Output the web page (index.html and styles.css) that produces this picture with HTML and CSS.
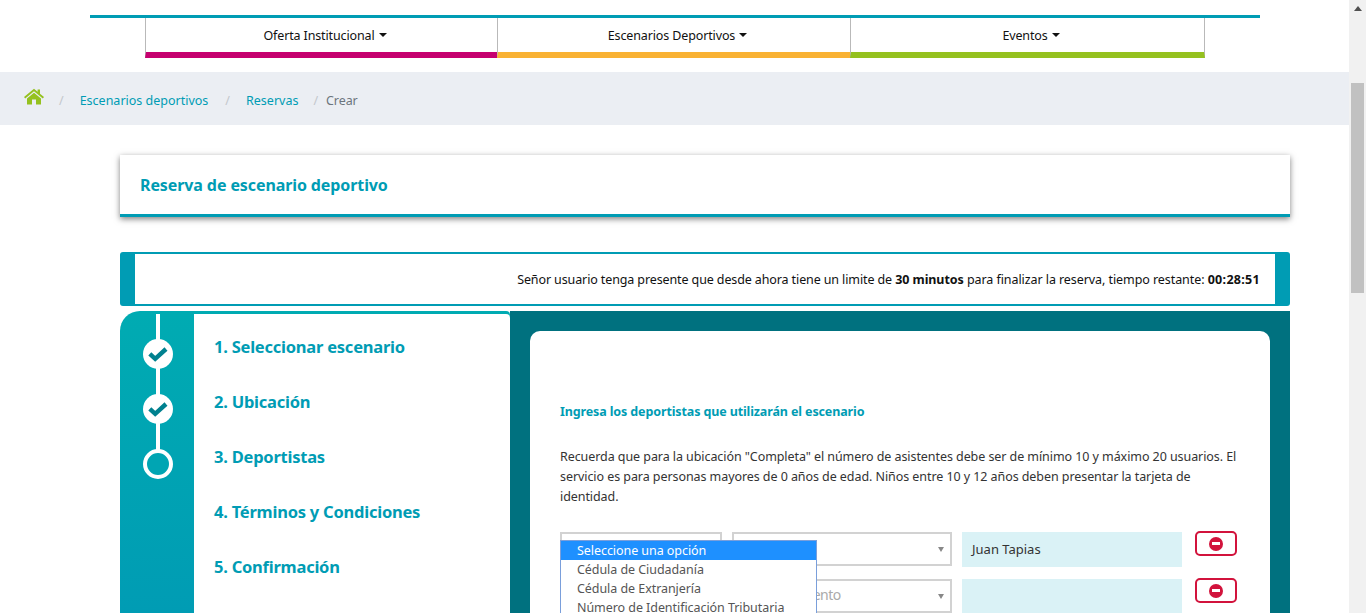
FILE: index.html
```html
<!DOCTYPE html>
<html lang="es">
<head>
    <meta charset="UTF-8">
    <title>Reserva de escenario deportivo</title>
    <link rel="stylesheet" href="styles.css">
</head>
<body>
    <div class="page">
        <header class="header">
            <nav class="menu">
                <a class="menu-item menu-pink">Oferta Institucional<span class="caret"></span></a>
                <a class="menu-item menu-yellow">Escenarios Deportivos<span class="caret"></span></a>
                <a class="menu-item menu-green">Eventos<span class="caret"></span></a>
            </nav>
        </header>

        <div class="breadcrumb">
            <svg class="home-icon" viewBox="0 0 20 17" width="20" height="17">
                <path fill="#95c11f" d="M10 0.8 L13.6 3.8 V1.6 H16 V5.8 L20 9.1 L18.8 10.4 L10 3.2 L1.2 10.4 L0 9.1 Z"/>
                <path fill="#95c11f" d="M10 4.8 L17 10.4 V16.6 H12 V11.6 H8 V16.6 H3 V10.4 Z"/>
            </svg>
            <span class="sep">/</span>
            <a class="crumb">Escenarios deportivos</a>
            <span class="sep">/</span>
            <a class="crumb">Reservas</a>
            <span class="sep sep-last">/</span>
            <span class="crumb-current">Crear</span>
        </div>

        <main class="main">
            <div class="title-card">
                <h1>Reserva de escenario deportivo</h1>
            </div>

            <div class="timer">
                <p><span class="timer-lead">Señor usuario tenga presente que desde ahora tiene un limite de</span> <b>30 minutos</b> para finalizar la reserva, tiempo restante: <b class="timer-clock">00:28:51</b></p>
            </div>

            <div class="wizard">
                <aside class="steps">
                    <div class="steps-rail">
                        <span class="rail-line"></span>
                        <span class="dot dot-done">
                            <svg viewBox="0 0 20 15" width="20" height="15"><path fill="none" stroke="#00818f" stroke-width="4.4" d="M1.8 6.8 L7.2 11.8 L18 2"/></svg>
                        </span>
                        <span class="dot dot-done">
                            <svg viewBox="0 0 20 15" width="20" height="15"><path fill="none" stroke="#00818f" stroke-width="4.4" d="M1.8 6.8 L7.2 11.8 L18 2"/></svg>
                        </span>
                        <span class="dot dot-open"></span>
                    </div>
                    <ol class="steps-list">
                        <li>1. Seleccionar escenario</li>
                        <li>2. Ubicación</li>
                        <li>3. Deportistas</li>
                        <li>4. Términos y Condiciones</li>
                        <li>5. Confirmación</li>
                    </ol>
                </aside>

                <section class="panel">
                    <div class="card">
                        <h2>Ingresa los deportistas que utilizarán el escenario</h2>
                        <p class="note">Recuerda que para la ubicación "Completa" el número de asistentes debe ser de mínimo 10 y máximo 20 usuarios. El servicio es para personas mayores de 0 años de edad. Niños entre 10 y 12 años deben presentar la tarjeta de identidad.</p>

                        <div class="form-row">
                            <div class="field field-type">
                                <ul class="options">
                                    <li class="option-active">Seleccione una opción</li>
                                    <li>Cédula de Ciudadanía</li>
                                    <li>Cédula de Extranjería</li>
                                    <li>Número de Identificación Tributaria</li>
                                </ul>
                            </div>
                            <div class="field field-doc"><span class="arrow"></span></div>
                            <div class="field-name">Juan Tapias</div>
                            <button class="btn-remove"><span class="minus"></span></button>
                        </div>
                        <div class="form-row">
                            <div class="field field-type"></div>
                            <div class="field field-doc"><span class="placeholder">Tipo documento</span><span class="arrow"></span></div>
                            <div class="field-name"></div>
                            <button class="btn-remove"><span class="minus"></span></button>
                        </div>
                    </div>
                </section>
            </div>
        </main>
    </div>

    <div class="scrollbar">
        <span class="scroll-up"></span>
        <span class="scroll-thumb"></span>
    </div>
</body>
</html>
```

FILE: styles.css
```css
* {
    box-sizing: border-box;
}

html, body {
    height: 613px;
    margin: 0;
    overflow: hidden;
}

body {
    display: flex;
    background-color: white;
    font-family: "Noto Sans", Arial, sans-serif;
    font-size: 13px;
    color: #333;
}

.page {
    flex: 1;
    height: 613px;
    overflow: hidden;
}

/* Cabecera */
.header {
    height: 72px;
    margin: 0 89px 0 90px;
    padding-top: 15px;
}

.menu {
    display: flex;
    height: 43px;
    margin: 0 55px;
    position: relative;
}

.menu::before {
    content: "";
    position: absolute;
    top: 0;
    left: -55px;
    right: -55px;
    height: 3px;
    background-color: #009cb4;
}

.menu-item {
    display: flex;
    justify-content: center;
    align-items: center;
    padding: 3px 0 0 7px;
    border-left: 1px solid #b9b9b9;
    border-bottom: 6px solid;
    color: #111;
    font-size: 12.5px;
    letter-spacing: -0.13px;
}

.menu-pink {
    width: 352px;
    border-bottom-color: #c6006f;
}

.menu-yellow {
    width: 353px;
    border-bottom-color: #f9b233;
}

.menu-green {
    flex: 1;
    border-right: 1px solid #b9b9b9;
    border-bottom-color: #95c11f;
}

.caret {
    margin-left: 4px;
    border-top: 4px solid #111;
    border-left: 4px solid transparent;
    border-right: 4px solid transparent;
}

/* Migas de pan */
.breadcrumb {
    display: flex;
    align-items: center;
    height: 53px;
    padding: 4px 0 0 24px;
    background-color: #ebeef3;
    color: #6c757d;
    font-size: 12.5px;
}

.home-icon {
    margin-top: -9px;
}

.sep {
    margin: 0 16px 0 17px;
    color: #c3c7cc;
}

.home-icon + .sep {
    margin-left: 15px;
}

.sep-last {
    margin: 0 8px 0 15px;
}

.crumb {
    color: #009cb4;
}

.crumb-current {
    letter-spacing: -0.1px;
}

/* Contenido */
.main {
    padding: 30px 59px 0 120px;
}

.title-card {
    height: 62px;
    padding-left: 20px;
    display: flex;
    align-items: center;
    border-bottom: 3px solid #009cb4;
    box-shadow: 0 2px 6px rgba(0, 0, 0, 0.5);
}

.title-card h1 {
    margin: 0;
    font-size: 16px;
    font-weight: 700;
    letter-spacing: -0.1px;
    color: #009cb4;
}

.timer {
    height: 54px;
    margin-top: 35px;
    padding: 2px 15px 2px 15px;
    background-color: #009cb4;
    border-radius: 3px;
}

.timer p {
    height: 100%;
    margin: 0;
    padding-top: 17px;
    padding-right: 15px;
    background-color: white;
    text-align: right;
    color: #111;
    font-size: 12.5px;
    line-height: 18px;
    letter-spacing: -0.07px;
}

.timer-lead {
    letter-spacing: -0.115px;
}

.timer-clock {
    letter-spacing: 0.3px;
}

.wizard {
    display: flex;
    height: 302px;
    margin-top: 5px;
}

.steps {
    display: flex;
    width: 390px;
    padding-top: 3px;
    border-radius: 20px 4px 0 0;
    background: linear-gradient(#00abb2, #009cb4);
}

.steps-rail {
    position: relative;
    display: flex;
    flex-direction: column;
    align-items: center;
    gap: 25px;
    width: 74px;
    padding: 28px 0 0 2px;
    margin-top: -3px;
}

.rail-line {
    position: absolute;
    top: 3px;
    left: 36px;
    width: 4px;
    height: 140px;
    background-color: white;
}

.dot {
    position: relative;
    display: flex;
    justify-content: center;
    align-items: center;
    width: 30px;
    height: 30px;
    border-radius: 50%;
    background-color: white;
}

.dot-open {
    background-color: #00a5b3;
    border: 4px solid white;
}

.steps-list {
    flex: 1;
    margin: 0;
    padding: 20px 0 0 20px;
    list-style: none;
    background-color: white;
    border-radius: 0 4px 0 0;
}

.steps-list li {
    height: 55px;
    line-height: 26px;
    font-size: 16.5px;
    font-weight: 700;
    letter-spacing: -0.23px;
    color: #009cb4;
}

.panel {
    flex: 1;
    padding: 20px 20px 0;
    background-color: #00717f;
}

.card {
    height: 100%;
    padding: 72px 30px 0;
    background-color: white;
    border-radius: 10px 10px 0 0;
}

.card h2 {
    margin: 0;
    font-size: 12.5px;
    line-height: 18px;
    font-weight: 700;
    letter-spacing: -0.12px;
    color: #009cb4;
}

.note {
    margin: 26px 0 0;
    font-size: 12.5px;
    line-height: 20px;
    letter-spacing: -0.07px;
    color: #333;
}

.form-row {
    display: flex;
    gap: 10px;
    height: 47px;
    margin-top: 25px;
}

.form-row + .form-row {
    margin-top: 0;
}

.field {
    position: relative;
    height: 34px;
    background-color: white;
    border: 2px solid #d2d2d2;
}

.field-type {
    width: 162px;
}

.field-doc {
    width: 220px;
    padding: 4px 0 0 6px;
    color: #aaa;
    font-size: 14px;
    letter-spacing: -0.5px;
    white-space: nowrap;
}

.arrow {
    position: absolute;
    top: 13px;
    right: 6px;
    border-top: 5px solid #888;
    border-left: 3px solid transparent;
    border-right: 3px solid transparent;
}

.placeholder {
    display: block;
    overflow: hidden;
    width: 150px;
}

.field-name {
    width: 220px;
    height: 35px;
    padding-left: 10px;
    line-height: 35px;
    background-color: #daf2f6;
    color: #333;
    font-size: 13px;
}

.btn-remove {
    display: flex;
    justify-content: center;
    align-items: center;
    width: 42px;
    height: 25px;
    margin: -1px 0 0 3px;
    padding: 0;
    background-color: white;
    border: 2px solid #d2133c;
    border-radius: 5px;
}

.minus {
    position: relative;
    width: 14px;
    height: 14px;
    border-radius: 50%;
    background-color: #d2133c;
}

.minus::after {
    content: "";
    position: absolute;
    top: 5px;
    left: 3px;
    width: 8px;
    height: 3px;
    background-color: white;
}

/* Lista desplegable abierta */
.options {
    position: absolute;
    top: 6px;
    left: -2px;
    z-index: 2;
    width: 257px;
    margin: 0;
    padding: 0;
    list-style: none;
    background-color: white;
    border: 1px solid #7a9fdb;
    color: #555;
    font-size: 12.5px;
    letter-spacing: -0.06px;
}

.options li {
    height: 19px;
    padding-left: 16px;
    line-height: 19px;
    white-space: nowrap;
}

.options .option-active {
    background-color: #1e90ff;
    color: white;
}

/* Barra de desplazamiento */
.scrollbar {
    position: relative;
    flex: none;
    width: 17px;
    height: 613px;
    background-color: #f1f1f1;
}

.scroll-up {
    position: absolute;
    top: 6px;
    left: 5px;
    border-bottom: 5px solid #505050;
    border-left: 4px solid transparent;
    border-right: 4px solid transparent;
}

.scroll-thumb {
    position: absolute;
    top: 83px;
    left: 2px;
    width: 13px;
    height: 210px;
    background-color: #c1c1c1;
}
```
